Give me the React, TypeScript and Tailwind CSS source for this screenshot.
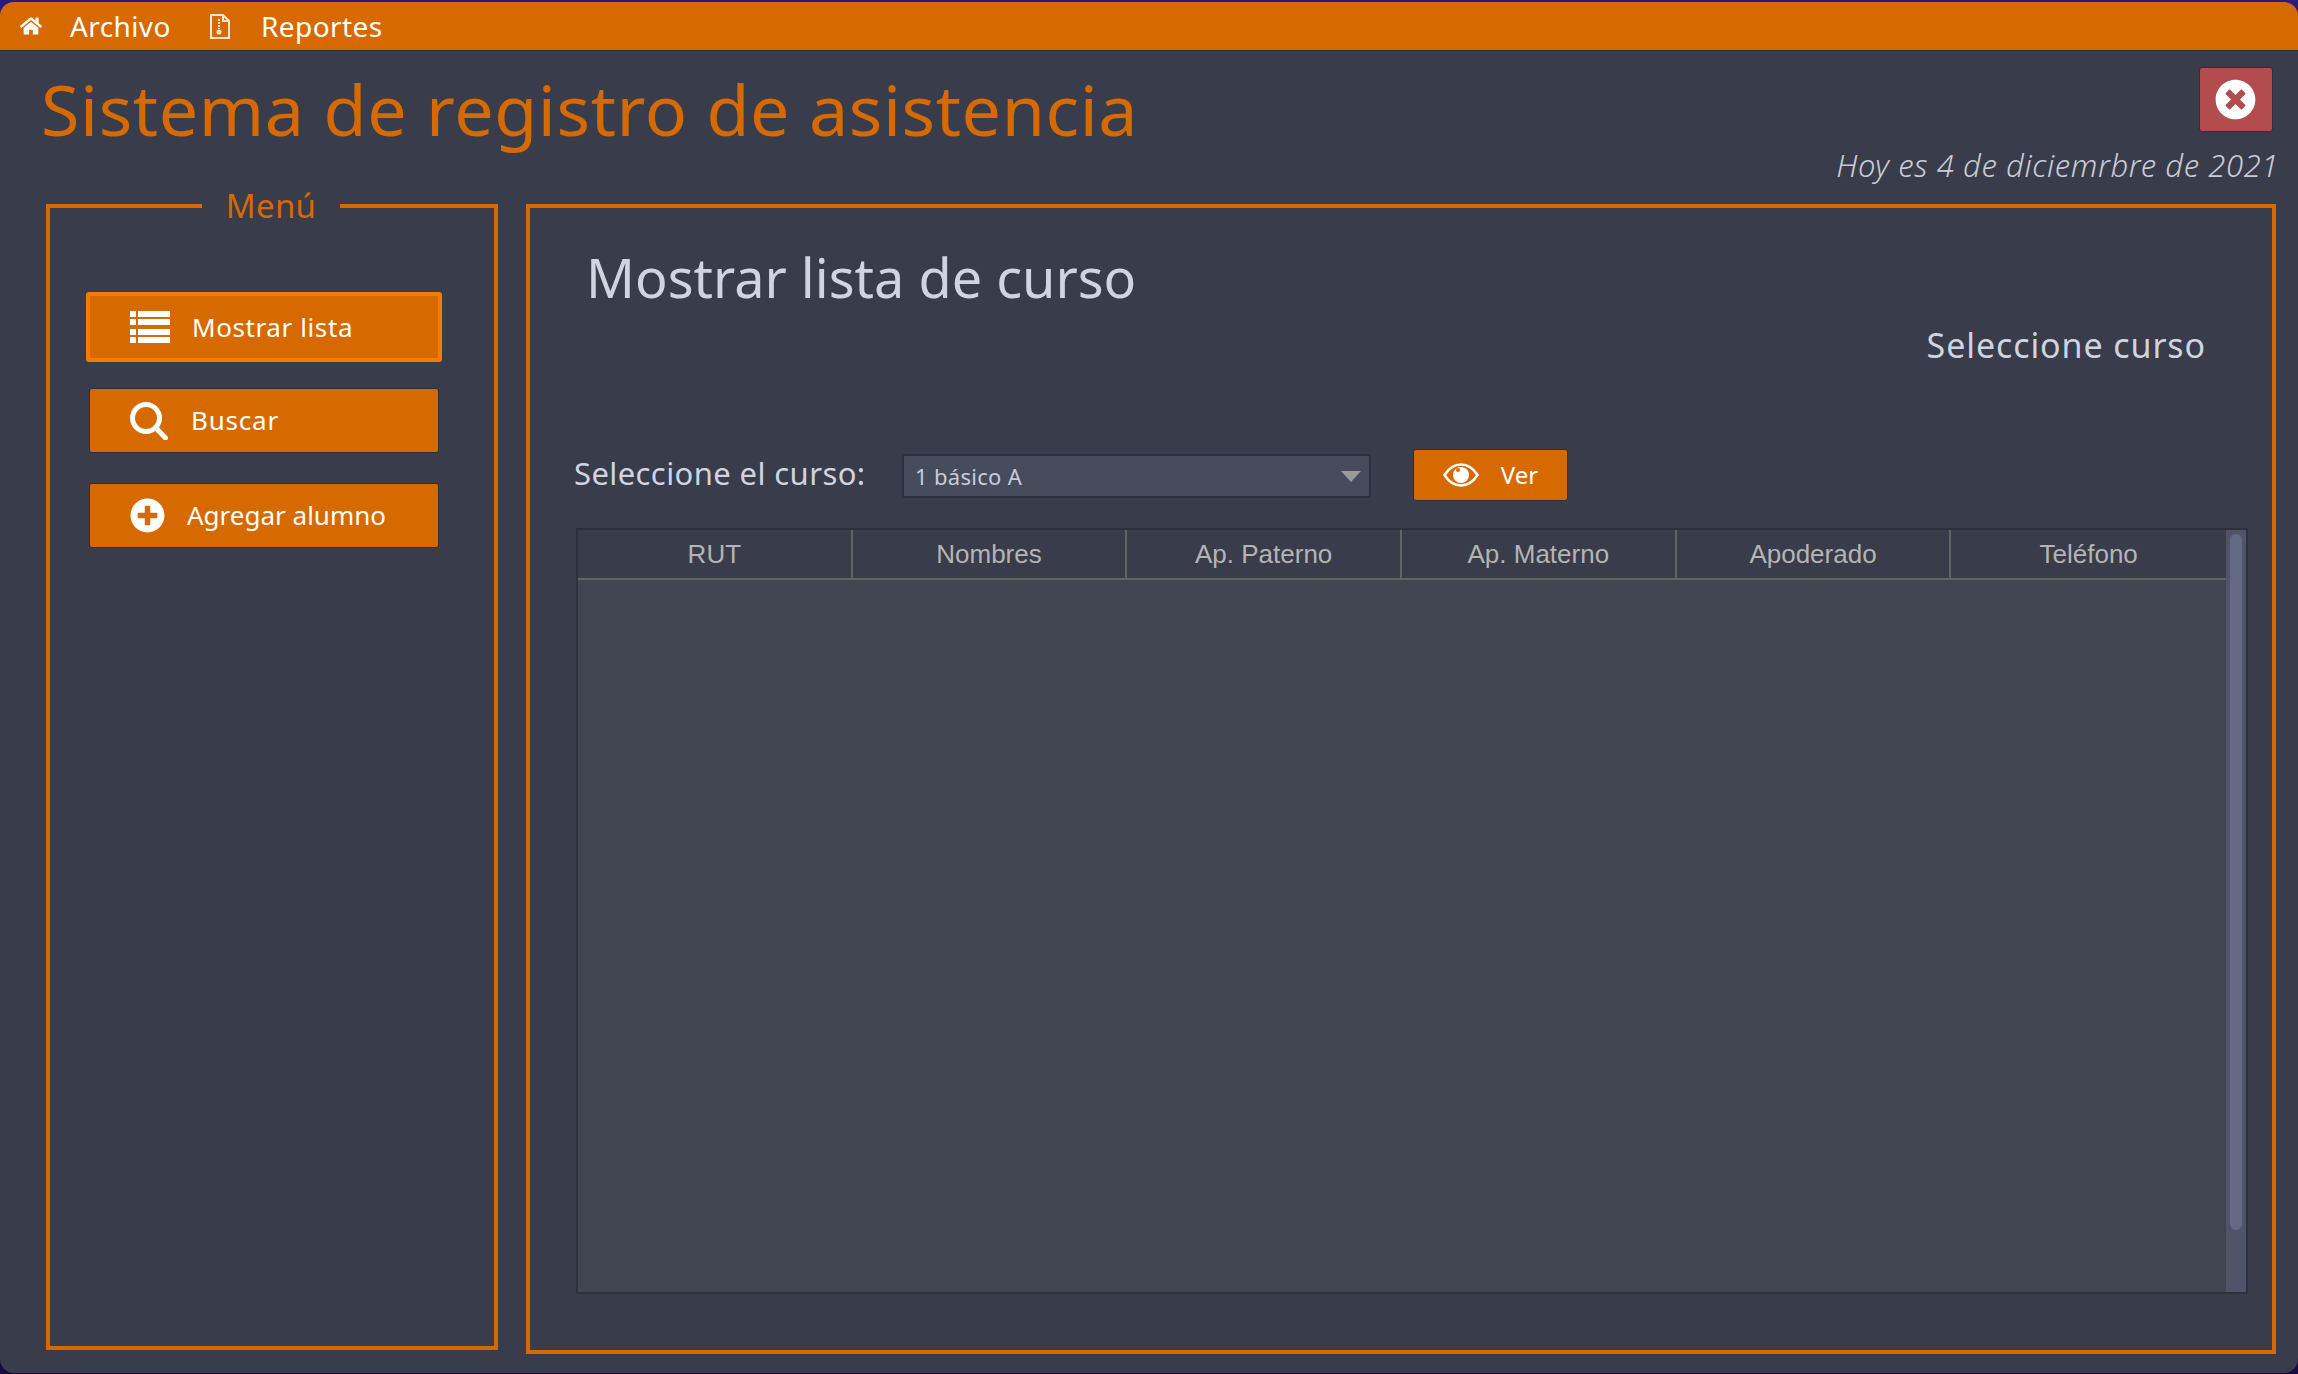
import { FaHome, FaPlusCircle, FaTimesCircle } from 'react-icons/fa'

const sans = "font-['Noto_Sans',sans-serif]"

function ListIcon() {
  return (
    <svg width="40" height="32" viewBox="0 0 40 32" fill="#fff">
      <rect x="0" y="0" width="6" height="6" />
      <rect x="8" y="0" width="32" height="6" />
      <rect x="0" y="8" width="6" height="6" />
      <rect x="8" y="8" width="32" height="6" />
      <rect x="0" y="18" width="6" height="6" />
      <rect x="8" y="18" width="32" height="6" />
      <rect x="0" y="26" width="6" height="6" />
      <rect x="8" y="26" width="32" height="6" />
    </svg>
  )
}

function SearchIcon() {
  return (
    <svg width="38" height="38" viewBox="0 0 38 38" fill="none" stroke="#fff" strokeWidth="5">
      <circle cx="16" cy="16" r="13.5" />
      <path d="M26 26l9.5 10" strokeLinecap="round" />
    </svg>
  )
}

function EyeIcon() {
  return (
    <svg width="36" height="24" viewBox="0 0 36 24">
      <path d="M1.5 12C6 5 11.5 1.5 18 1.5S30 5 34.5 12C30 19 24.500 22.500 18 22.500S6 19 1.500 12z" fill="none" stroke="#fff" strokeWidth="2.500" />
      <circle cx="18" cy="12" r="8" fill="#fff" />
      <circle cx="15" cy="7" r="2" fill="#d66a00" />
    </svg>
  )
}

function ZipIcon() {
  return (
    <svg width="20" height="25" viewBox="0 0 20 25" fill="none" stroke="#f5e6d8" strokeWidth="2">
      <path d="M1 1h12l6 6v17H1z" />
      <path d="M13 1v6h6" />
      <path d="M9 5v10" strokeDasharray="2 1" />
      <circle cx="9" cy="18" r="1.500" />
    </svg>
  )
}

function MenuButton({ icon, label, spacing, focused }: { icon: React.ReactNode; label: string; spacing: string; focused?: boolean }) {
  return (
    <button
      className={`flex items-center rounded-[3px] bg-[#d66a00] text-[26px] text-white ${spacing} ${
        focused ? 'h-[70px] w-[356px] border-4 border-[#f57c00] pl-10' : 'mx-[3px] h-[65px] w-[350px] border border-[#2e303b] pl-10'
      }`}
    >
      {icon}
      {label}
    </button>
  )
}

const columns = ['RUT', 'Nombres', 'Ap. Paterno', 'Ap. Materno', 'Apoderado', 'Teléfono']

export default function App() {
  return (
    <div className={`h-[1374px] w-[2298px] overflow-hidden bg-linear-to-b from-[#2a1a80] to-[#1a0c40] pt-[2px] pb-[1px] ${sans}`}>
      <div className="flex h-full flex-col overflow-hidden rounded-[14px] bg-[#393c4a]">
        {/* Menubar */}
        <div className="flex h-[49px] shrink-0 items-center border-b border-[#2e303b] bg-[#d66a00] pl-5 text-[28px] tracking-[0.4px] text-white">
          <FaHome className="mr-7 text-[22px]" />
          <span className="w-[140px]">Archivo</span>
          <ZipIcon />
          <span className="ml-[31px]">Reportes</span>
        </div>

        {/* Header */}
        <div className="flex h-[153px] shrink-0 justify-between pl-[41px] pr-[19px]">
          <h1 className="mt-[12px] text-[70px] leading-[92px] tracking-[0.6px] text-[#d66a00]">Sistema de registro de asistencia</h1>
          <div className="flex flex-col items-end">
            <button className="mt-[16px] mr-[6px] flex h-[65px] w-[74px] items-center justify-center rounded-[3px] border border-[#2e303b] bg-[#b34d4d]">
              <FaTimesCircle className="-ml-[2px] text-[41px] text-white" />
            </button>
            <p className="mt-[12px] text-[31px] leading-[42px] font-light tracking-[0.6px] text-[#c8ccd8] italic">Hoy es 4 de diciemrbre de 2021</p>
          </div>
        </div>

        <div className="flex gap-[28px] pl-[46px] pr-[22px]">
          {/* Sidebar */}
          <div className="relative flex h-[1146px] w-[452px] shrink-0 flex-col gap-[26px] border-4 border-[#d66a00] pl-[36px] pt-[84px]">
            <span className="absolute -top-[24px] left-[152px] w-[138px] bg-[#393c4a] text-center text-[33px] leading-[44px] tracking-[0.3px] text-[#d66a00]">Menú</span>
            <MenuButton focused icon={<span className="mr-[22px]"><ListIcon /></span>} label="Mostrar lista" spacing="tracking-[0.6px]" />
            <MenuButton icon={<span className="mr-[23px]"><SearchIcon /></span>} label="Buscar" spacing="tracking-[0.8px]" />
            <div className="mt-[4px]">
              <MenuButton icon={<FaPlusCircle className="mr-[22px] text-[35px]" />} label="Agregar alumno" spacing="tracking-[0px]" />
            </div>
          </div>

          {/* Main panel */}
          <div className="flex h-[1150px] flex-1 flex-col border-4 border-[#d66a00] pl-[44px] pr-[24px]">
            <h2 className="mt-[34px] pl-[12px] text-[54px] leading-[70px] text-[#d0d4e0]">Mostrar lista de curso</h2>
            <p className="mt-[10px] self-end pr-[42px] text-[34px] leading-[46px] tracking-[0.9px] text-[#d0d4e0]">Seleccione curso</p>

            <div className="mt-[81px] flex h-[52px] items-center">
              <label className="mb-[4px] w-[328px] text-[31px] tracking-[0.4px] text-[#d0d4e0]">Seleccione el curso:</label>
              <div className="mt-[2px] flex h-[44px] w-[469px] items-center justify-between rounded-[3px] border-2 border-[#2e303b] bg-[#474c5c] pl-[11px] pr-[8px] text-[22px] tracking-[0.3px] text-[#c8ccd8]">
                1 básico A
                <span className="h-0 w-0 border-x-[10px] border-t-[11px] border-x-transparent border-t-[#9a9a9a]" />
              </div>
              <button className="ml-[42px] flex h-[52px] w-[155px] items-center justify-center gap-[22px] rounded-[3px] border border-[#2e303b] bg-[#d66a00] text-[24px] text-white">
                <EyeIcon />
                Ver
              </button>
            </div>

            {/* Table */}
            <div className="mt-[27px] ml-[2px] flex h-[766px] w-[1672px] border-2 border-[#2e303b]">
              <div className="flex flex-1 flex-col bg-[#3f4551]">
                <div className="grid h-[50px] grid-cols-6 border-b-2 border-[#5f6560] bg-[#393c4a] font-['Liberation_Sans',sans-serif] text-[26px] text-[#b4b4b4]">
                  {columns.map((c, i) => (
                    <div key={c} className={`flex items-center justify-center ${i < 5 ? 'border-r-2 border-[#5f6560]' : ''}`}>{c}</div>
                  ))}
                </div>
              </div>
              <div className="w-[20px] bg-[#4f5468] px-[4px] pt-[4px]">
                <div className="h-[696px] rounded-full bg-[#646a84]" />
              </div>
            </div>
          </div>
        </div>
      </div>
    </div>
  )
}
